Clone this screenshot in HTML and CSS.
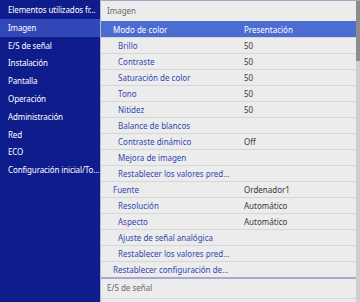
FILE: index.html
```html
<!DOCTYPE html>
<html lang="es">
<head>
<meta charset="utf-8">
<link rel="stylesheet" href="styles.css">
</head>
<body>
<div class="screen">
  <nav class="side">
    <div class="side-item">Elementos utilizados fr...</div>
    <div class="side-item active">Imagen</div>
    <div class="side-item">E/S de señal</div>
    <div class="side-item">Instalación</div>
    <div class="side-item">Pantalla</div>
    <div class="side-item">Operación</div>
    <div class="side-item">Administración</div>
    <div class="side-item">Red</div>
    <div class="side-item">ECO</div>
    <div class="side-item">Configuración inicial/To...</div>
  </nav>
  <main class="panel">
    <div class="list">
      <div class="head">Imagen</div>
      <div class="row l1 selected"><span class="name">Modo de color</span><span class="val">Presentación</span></div>
      <div class="row l2"><span class="name">Brillo</span><span class="val">50</span></div>
      <div class="row l2"><span class="name">Contraste</span><span class="val">50</span></div>
      <div class="row l2"><span class="name">Saturación de color</span><span class="val">50</span></div>
      <div class="row l2"><span class="name">Tono</span><span class="val">50</span></div>
      <div class="row l2"><span class="name">Nitidez</span><span class="val">50</span></div>
      <div class="row l2"><span class="name">Balance de blancos</span><span class="val"></span></div>
      <div class="row l2"><span class="name">Contraste dinámico</span><span class="val">Off</span></div>
      <div class="row l2"><span class="name">Mejora de imagen</span><span class="val"></span></div>
      <div class="row l2"><span class="name">Restablecer los valores pred...</span><span class="val"></span></div>
      <div class="row l1"><span class="name">Fuente</span><span class="val">Ordenador1</span></div>
      <div class="row l2"><span class="name">Resolución</span><span class="val">Automático</span></div>
      <div class="row l2"><span class="name">Aspecto</span><span class="val">Automático</span></div>
      <div class="row l2"><span class="name">Ajuste de señal analógica</span><span class="val"></span></div>
      <div class="row l2"><span class="name">Restablecer los valores pred...</span><span class="val"></span></div>
      <div class="row l1"><span class="name">Restablecer configuración de...</span><span class="val"></span></div>
      <div class="head sect">E/S de señal</div>
      <div class="head">Instalación</div>
    </div>
    <div class="scroll"><div class="thumb"></div></div>
  </main>
</div>
</body>
</html>
```
FILE: styles.css
```css
* { box-sizing: border-box; }
html, body { margin: 0; padding: 0; }
body {
  width: 360px;
  height: 302px;
  overflow: hidden;
  font-family: "Noto Sans", "Open Sans", sans-serif;
  font-size: 8px;
  background: #ececec;
}
.screen {
  display: flex;
  height: 302px;
}
.side {
  width: 100px;
  flex: none;
  background: #0f1c8c;
  color: #ffffff;
  padding-top: 1px;
}
.side-item {
  height: 17.8px;
  line-height: 17.8px;
  padding-left: 8px;
  white-space: nowrap;
  overflow: hidden;
  letter-spacing: -0.12px;
}
.side-item.active {
  background: #3248b8;
}
.panel {
  flex: 1;
  display: flex;
  background: #ececec;
  border-left: 1px solid #b4b8d6;
  border-top: 1px solid #a3a7c6;
  overflow: hidden;
}
.list {
  flex: 1;
  display: flex;
  flex-direction: column;
}
.head {
  flex: none;
  height: 20px;
  line-height: 20px;
  padding-left: 6px;
  color: #6a6a6a;
}
.head.sect {
  border-top: 2px solid #a6aad0;
  height: 21px;
  line-height: 18px;
}
.head + .head {
  border-top: 1px solid #d6d6d6;
}
.row {
  flex: none;
  display: flex;
  height: 16px;
  line-height: 15px;
  border-top: 1px solid #d6d6d6;
  color: #3546ad;
  white-space: nowrap;
}
.row .name {
  width: 143px;
  flex: none;
}
.row.l1 .name { padding-left: 12px; }
.row.l2 .name { padding-left: 17px; }
.row .val {
  color: #3a3a3a;
}
.row.selected {
  background: #4b6cd1;
  border-top-color: #4b6cd1;
}
.row.selected .name,
.row.selected .val {
  color: #ffffff;
}
.scroll {
  width: 4px;
  flex: none;
  background: #cfcfcf;
}
.thumb {
  height: 60px;
  background: #8c8c8c;
}
```
